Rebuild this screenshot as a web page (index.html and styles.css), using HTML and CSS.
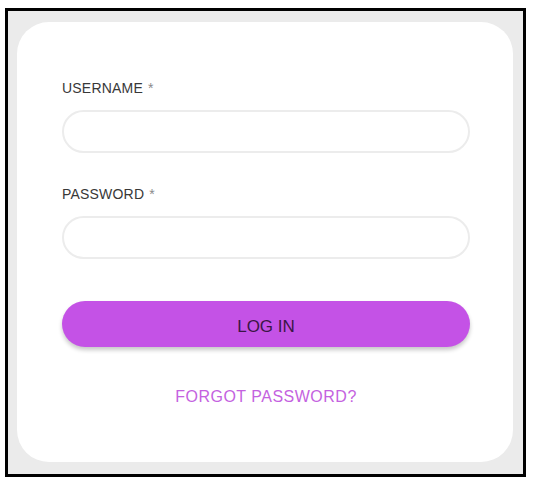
FILE: index.html
```html
<!DOCTYPE html>
<html>
<head>
<meta charset="utf-8">
<link rel="stylesheet" href="styles.css">
</head>
<body>
<div class="frame">
  <form class="card">
    <label class="label" for="u">USERNAME <span class="req">*</span></label>
    <div class="input" id="u"></div>
    <label class="label label-pw" for="p">PASSWORD <span class="req">*</span></label>
    <div class="input" id="p"></div>
    <div class="btn">LOG IN</div>
    <div class="forgot">FORGOT PASSWORD?</div>
  </form>
</div>
</body>
</html>
```
FILE: styles.css
```css
html, body {
  margin: 0;
  padding: 0;
  background: #ffffff;
}
body {
  font-family: "Liberation Sans", Arial, sans-serif;
}
.frame {
  box-sizing: border-box;
  margin: 8px 0 0 5px;
  width: 521px;
  height: 469px;
  border: 3px solid #000000;
  background: #ebebeb;
  padding: 11px 10px 12px 9px;
}
.card {
  box-sizing: border-box;
  height: 440px;
  background: #ffffff;
  border-radius: 32px;
  padding: 58px 43px 0 45px;
  display: flex;
  flex-direction: column;
}
.label {
  display: block;
  font-size: 14px;
  line-height: 16px;
  letter-spacing: 0.2px;
  color: #383838;
  margin-bottom: 14px;
}
.label-pw {
  margin-top: 33px;
}
.req {
  color: #8a8a8a;
  margin-left: 1px;
}
.input {
  box-sizing: border-box;
  height: 43px;
  border: 2px solid #ececec;
  border-radius: 22px;
  background: #ffffff;
}
.btn {
  box-sizing: border-box;
  margin-top: 42px;
  height: 46px;
  border-radius: 23px;
  background: #c452e6;
  color: #3a1645;
  font-size: 17px;
  line-height: 46px;
  padding-top: 3px;
  text-align: center;
  box-shadow: 0 3px 4px rgba(0, 0, 0, 0.22);
}
.forgot {
  margin-top: 41px;
  font-size: 16px;
  line-height: 18px;
  letter-spacing: 0.5px;
  text-align: center;
  color: #c462e0;
}
```
